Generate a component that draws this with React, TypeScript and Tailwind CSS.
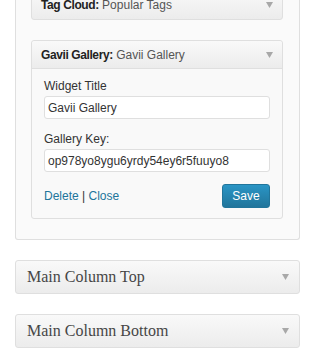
import React from "react";

const Arrow = () => (
  <svg width="7" height="6" viewBox="0 0 7 6" className="shrink-0">
    <path d="M0 0 H7 L3.5 6 Z" fill="#a8a8a8" />
  </svg>
);

export default function App() {
  return (
    <div
      className="w-[318px] h-[360px] overflow-hidden bg-white"
      style={{ fontFamily: '"Liberation Sans", Arial, sans-serif' }}
    >
      <div className="ml-[15px] w-[285px] border border-t-0 border-[#dfdfdf] rounded-b-[3px] bg-[#fafafa] px-[15px] pb-[20px]">
        {/* Tag Cloud collapsed */}
        <div className="mt-[-10px] w-[252px] h-[30px] border border-[#dfdfdf] rounded-[3px] bg-gradient-to-b from-[#f9f9f9] to-[#ececec] flex items-center justify-between pl-[9px] pr-[9px]">
          <div className="text-[12px] leading-[15px] pt-[1px]">
            <span className="font-bold text-[#222] tracking-[-0.4px]">Tag Cloud:</span>{" "}
            <span className="text-[#555]">Popular Tags</span>
          </div>
          <Arrow />
        </div>

        {/* Gavii Gallery expanded */}
        <div className="mt-[20px] w-[252px] border border-[#dfdfdf] rounded-[3px] bg-[#f9f9f9]">
          <div className="h-[28px] bg-gradient-to-b from-[#f9f9f9] to-[#ececec] flex items-center justify-between pl-[9px] pr-[9px] border-b border-[#dfdfdf] rounded-t-[3px]">
            <div className="text-[12px] leading-[15px] pt-[1px]">
              <span className="font-bold text-[#222] tracking-[-0.4px]">Gavii Gallery:</span>{" "}
              <span className="text-[#555]">Gavii Gallery</span>
            </div>
            <Arrow />
          </div>
          <div className="px-[12px] pt-[10px] pb-[10px]">
            <div className="text-[12px] leading-[15px] text-[#333]">Widget Title</div>
            <div className="mt-[2px] h-[23px] w-full border border-[#dfdfdf] rounded-[3px] bg-white flex items-center px-[3px] text-[12px] text-[#333]">
              Gavii Gallery
            </div>
            <div className="mt-[13px] text-[12px] leading-[15px] text-[#333]">Gallery Key:</div>
            <div className="mt-[2px] h-[23px] w-full border border-[#dfdfdf] rounded-[3px] bg-white flex items-center px-[3px] text-[12px] text-[#333]">
              op978yo8ygu6yrdy54ey6r5fuuyo8
            </div>
            <div className="mt-[12px] flex items-center justify-between">
              <div className="text-[12px] leading-[15px] text-[#333]">
                <span className="text-[#21759b]">Delete</span> |{" "}
                <span className="text-[#21759b]">Close</span>
              </div>
              <div className="h-[24px] w-[48px] border border-[#21759b] rounded-[3px] bg-gradient-to-b from-[#2a95c5] to-[#21759b] text-white text-[12px] flex items-center justify-center">
                Save
              </div>
            </div>
          </div>
        </div>
      </div>

      <div className="mt-[20px] ml-[15px] w-[285px] flex flex-col gap-[20px]">
        {["Main Column Top", "Main Column Bottom"].map((t) => (
          <div
            key={t}
            className="h-[34px] border border-[#dfdfdf] rounded-[3px] bg-gradient-to-b from-[#f9f9f9] to-[#ececec] flex items-center justify-between pl-[11px] pr-[10px]"
          >
            <span
              className="text-[16px] text-[#464646]"
              style={{ fontFamily: '"Liberation Serif", "Times New Roman", serif' }}
            >
              {t}
            </span>
            <Arrow />
          </div>
        ))}
      </div>
    </div>
  );
}
